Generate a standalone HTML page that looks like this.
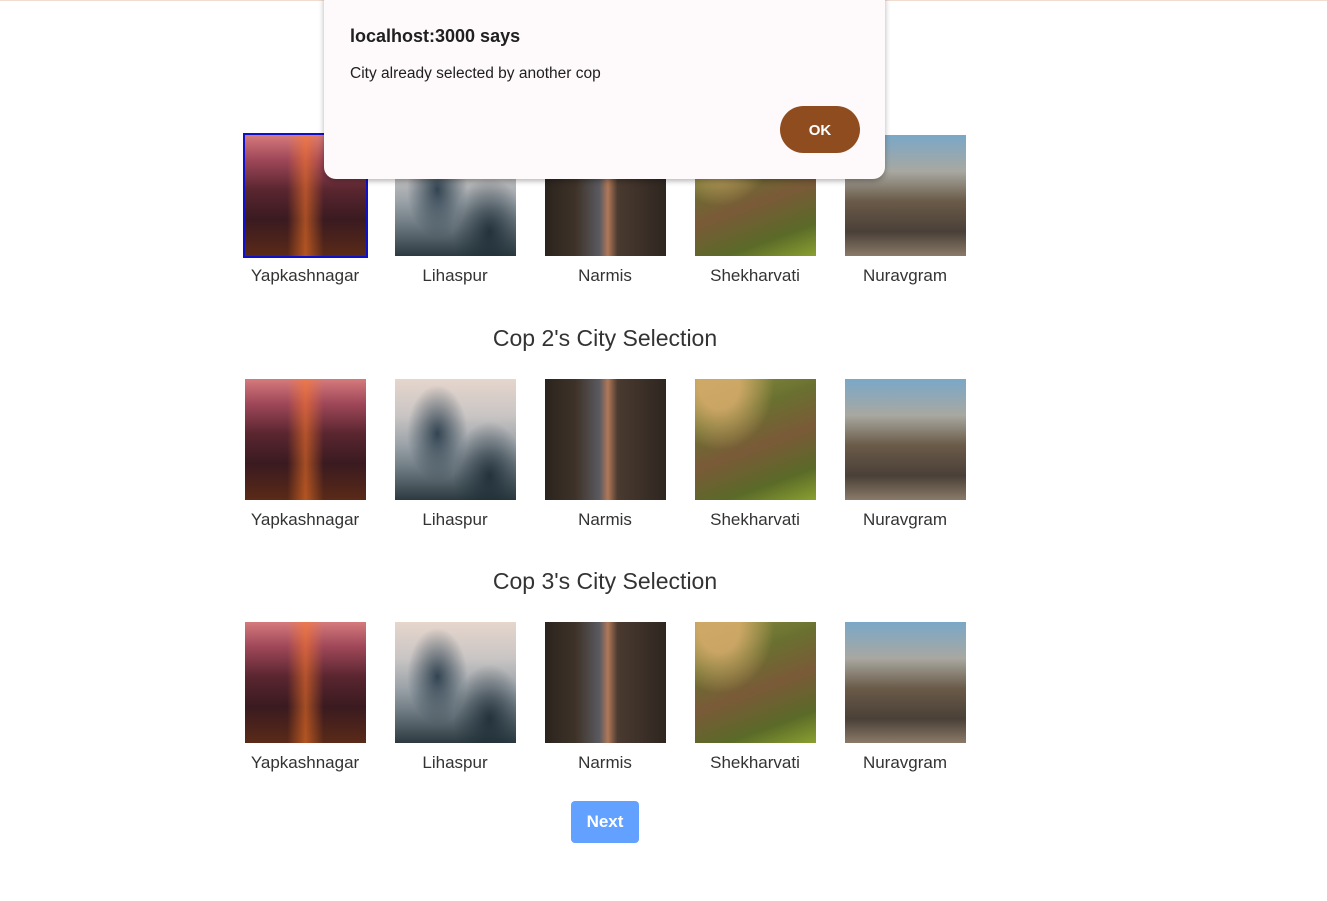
<!DOCTYPE html>
<html><head><meta charset="utf-8"><style>
body{margin:0;width:1327px;height:901px;background:#fff;font-family:"Liberation Sans",Arial,sans-serif;position:relative;overflow:hidden;color:#333}
.top{position:absolute;left:0;top:0;width:1327px;height:1px;background:#f1dcd2}
.img{position:absolute;width:121px;height:121px}
.a{background:linear-gradient(90deg,transparent 0 35%,rgba(255,120,40,.55) 50%,transparent 65%),linear-gradient(180deg,#d57a7c 0%,#a0485a 20%,#5a2630 45%,#3a1a20 70%,#5a2a18 100%)}
.b{background:radial-gradient(ellipse 25% 40% at 35% 45%,rgba(30,50,65,.85),transparent),radial-gradient(ellipse 30% 45% at 78% 80%,rgba(25,40,50,.85),transparent),linear-gradient(180deg,#e6d6cc 0%,#c9c5c4 30%,#9aa2a8 55%,#6c7880 75%,#2c3a40 100%)}
.c{background:linear-gradient(90deg,#2a241e 0%,#3e3228 25%,#5a5a60 45%,#b07858 52%,#4a3a30 60%,#2e2620 100%)}
.d{background:radial-gradient(ellipse at 20% 5%,rgba(224,176,112,.8) 0 15%,transparent 40%),linear-gradient(160deg,#8a9040 0%,#6a7030 30%,#7a5a38 55%,#5a6a28 80%,#8aa030 100%)}
.e{background:linear-gradient(180deg,#7aa8c8 0%,#a8a8a0 30%,#6a5a48 55%,#4a4038 80%,#8a7a68 100%)}
.lab{position:absolute;width:150px;text-align:center;font-size:17px;color:#333}
h2{position:absolute;margin:0;width:1210px;text-align:center;font-weight:normal;font-size:23px;color:#333}
.sel{position:absolute;left:243px;top:133px;width:121px;height:121px;border:2px solid #1010c8}
.btn{position:absolute;left:571px;top:801px;width:68px;height:42px;background:#62a1ff;border-radius:4px;color:#fff;font-weight:bold;font-size:17px;text-align:center;line-height:42px}
.dlg{position:absolute;left:324px;top:-12px;width:561px;height:191px;background:#fefafc;border-radius:12px;box-shadow:0 2px 6px rgba(0,0,0,.3)}
.dlg .t{position:absolute;left:26px;top:38px;font-size:18px;color:#202020;font-family:"Liberation Sans",sans-serif;font-weight:bold}
.dlg .m{position:absolute;left:26px;top:77px;font-size:15.5px;color:#202020;font-family:"Liberation Sans",sans-serif}
.ok{position:absolute;left:456px;top:118px;width:80px;height:47px;border-radius:24px;background:#8f4c1f;color:#fff;font-weight:bold;font-size:15px;text-align:center;line-height:49px;font-family:"Liberation Sans",sans-serif}
</style></head><body>
<div class="top"></div>

<div class="img a" style="left:245px;top:135px"></div><div class="sel"></div>
<div class="img b" style="left:395px;top:135px"></div>
<div class="img c" style="left:545px;top:135px"></div>
<div class="img d" style="left:695px;top:135px"></div>
<div class="img e" style="left:845px;top:135px"></div>
<div class="lab" style="left:230px;top:266px">Yapkashnagar</div>
<div class="lab" style="left:380px;top:266px">Lihaspur</div>
<div class="lab" style="left:530px;top:266px">Narmis</div>
<div class="lab" style="left:680px;top:266px">Shekharvati</div>
<div class="lab" style="left:830px;top:266px">Nuravgram</div>

<h2 style="top:325px">Cop 2's City Selection</h2>
<div class="img a" style="left:245px;top:379px"></div>
<div class="img b" style="left:395px;top:379px"></div>
<div class="img c" style="left:545px;top:379px"></div>
<div class="img d" style="left:695px;top:379px"></div>
<div class="img e" style="left:845px;top:379px"></div>
<div class="lab" style="left:230px;top:510px">Yapkashnagar</div>
<div class="lab" style="left:380px;top:510px">Lihaspur</div>
<div class="lab" style="left:530px;top:510px">Narmis</div>
<div class="lab" style="left:680px;top:510px">Shekharvati</div>
<div class="lab" style="left:830px;top:510px">Nuravgram</div>

<h2 style="top:568px">Cop 3's City Selection</h2>
<div class="img a" style="left:245px;top:622px"></div>
<div class="img b" style="left:395px;top:622px"></div>
<div class="img c" style="left:545px;top:622px"></div>
<div class="img d" style="left:695px;top:622px"></div>
<div class="img e" style="left:845px;top:622px"></div>
<div class="lab" style="left:230px;top:753px">Yapkashnagar</div>
<div class="lab" style="left:380px;top:753px">Lihaspur</div>
<div class="lab" style="left:530px;top:753px">Narmis</div>
<div class="lab" style="left:680px;top:753px">Shekharvati</div>
<div class="lab" style="left:830px;top:753px">Nuravgram</div>

<div class="btn">Next</div>

<div class="dlg">
<div class="t">localhost:3000 says</div>
<div class="m">City already selected by another cop</div>
<div class="ok">OK</div>
</div>
</body></html>
